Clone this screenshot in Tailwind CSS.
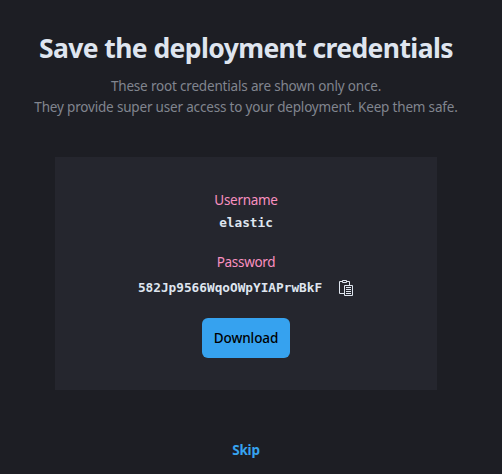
<!DOCTYPE html>
<html lang="en"><head><meta charset="utf-8"><title>Save the deployment credentials</title>
<script src="https://cdn.jsdelivr.net/npm/@tailwindcss/browser@4"></script></head>
<body class="bg-[#1d1e24] font-['Noto_Sans',sans-serif] h-[474px] overflow-hidden">
<main class="flex w-[492px] flex-col items-center pt-[30px] text-center">
<h1 class="text-[26.5px] leading-9 tracking-[-0.6px] font-bold text-[#dfe5ef] whitespace-nowrap">Save the deployment credentials</h1>
<p class="mt-[10px] text-[13.5px] leading-[21px] tracking-[-0.18px] text-[#81858f] whitespace-nowrap">These root credentials are shown only once.<br>They provide super user access to your deployment. Keep them safe.</p>
<section class="mt-[39px] w-[382px] h-[233px] bg-[#25262e] flex flex-col items-center pt-[33px] text-[13.5px] tracking-[-0.3px] leading-[21px]">
<div class="text-[#f990c0]">Username</div>
<code class="mt-px font-['DejaVu_Sans_Mono',monospace] font-bold text-[12.75px] tracking-normal leading-[21px] text-[#dfe5ef]">elastic</code>
<div class="mt-[19px] text-[#f990c0]">Password</div>
<div class="mt-[2px] flex items-center gap-4 h-6"><code class="font-['DejaVu_Sans_Mono',monospace] font-bold text-[12.75px] tracking-normal text-[#dfe5ef]">582Jp9566WqoOWpYIAPrwBkF</code>
<svg class="w-4 h-[18px]" viewBox="0 0 16 18" fill="none" stroke="#dfe5ef"><path d="M4.5 3.5h-3v12h5M8.5 3.5h3v4M4.5 2.5h4v2h-4zM6.5 7.5h8v10h-8zM8 9.5h5M8 11.5h5M8 13.5h5M8 15.5h5"/></svg></div>
<button class="mt-[19px] w-[88px] h-10 rounded-md bg-[#36a2ef] text-black font-medium tracking-[-0.1px]">Download</button>
</section>
<a class="mt-[50px] text-[13.5px] leading-[21px] tracking-[-0.2px] font-bold text-[#36a2ef]">Skip</a>
</main></body></html>
